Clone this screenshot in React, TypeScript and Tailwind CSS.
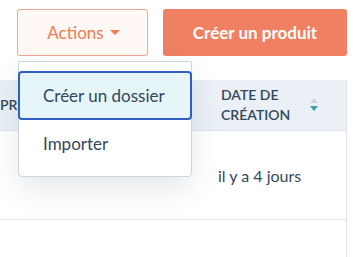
import React from "react";

function SortIcon() {
  return (
    <svg width="10" height="16" viewBox="0 0 10 16" className="block">
      <path d="M5 1 L9 6 L1 6 Z" fill="#cbd6e2" />
      <path d="M1 9 L9 9 L5 14 Z" fill="#3a9fb5" />
    </svg>
  );
}

const rows = ["il y a 4 jours", "il y a 4 jours"];

export default function App() {
  return (
    <div
      className="relative h-[257px] w-[360px] overflow-hidden bg-white text-[#33475b]"
      style={{ fontFamily: "Lato, 'Open Sans', sans-serif" }}
    >
      <div className="flex justify-end gap-[15px] pt-[9px] pr-[13px]">
        <button className="flex h-[47px] w-[131px] items-center justify-center gap-[6px] rounded-[3px] border border-[#f5a58d] bg-[#fff8f5] pl-[2px] text-[17px] text-[#f07a51]">
          Actions
          <svg width="10" height="6" viewBox="0 0 10 6">
            <path d="M0 0 L10 0 L5 5 Z" fill="#f07a51" />
          </svg>
        </button>
        <button className="flex h-[47px] w-[184px] items-center justify-center rounded-[3px] bg-[#ef8062] text-[17px] font-bold text-white">
          Créer un produit
        </button>
      </div>

      <div className="mt-[24px] mr-[13px] border-r border-[#dfe3eb]">
        <div className="flex h-[51px] items-center border-b border-[#dfe3eb] bg-[#eaf0f6] text-[14px] font-semibold leading-[20px]">
          <div className="w-[197px]">PRIX</div>
          <div className="flex flex-1 items-center justify-between pl-[24px] pr-[27px]">
            <span>
              DATE DE
              <br />
              CRÉATION
            </span>
            <SortIcon />
          </div>
        </div>
        {rows.map((r, i) => (
          <div
            key={i}
            className="flex h-[89px] items-center border-b border-[#dfe3eb] pt-[2px] text-[16px]"
          >
            <div className="w-[197px]" />
            <div className="pl-[21px]">{r}</div>
          </div>
        ))}
      </div>

      <div className="absolute top-[61px] left-[18px] w-[174px] rounded-b-[4px] border border-[#cbd6e2] bg-white pt-[9px] pb-[9px] shadow-[0_12px_30px_rgba(45,62,80,0.12)]">
        <div className="-mx-px flex h-[49px] items-center rounded-[4px] border-2 border-[#2f5fc4] bg-[#e5f5f8] pl-[23px] text-[17px]">
          Créer un dossier
        </div>
        <div className="flex h-[47px] items-center pl-[24px] text-[17px]">
          Importer
        </div>
      </div>
    </div>
  );
}
